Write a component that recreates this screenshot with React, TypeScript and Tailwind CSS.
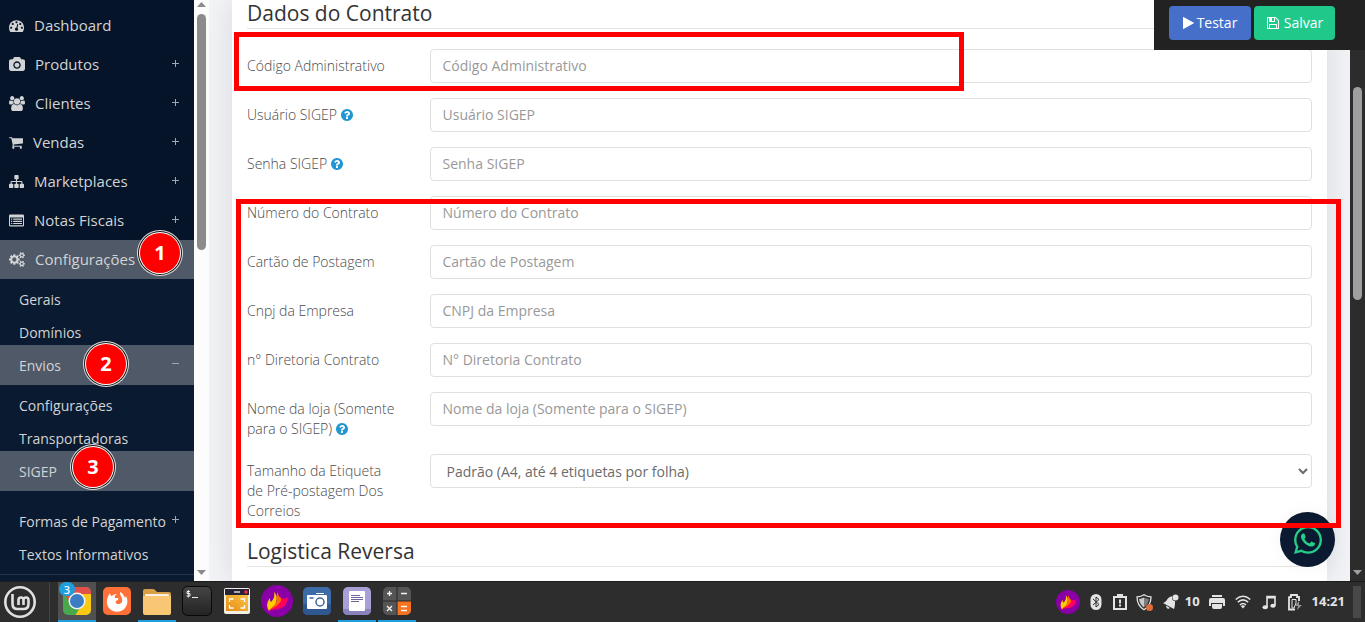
import React from "react";
import { FaWhatsapp } from "react-icons/fa";

function Glyph({ box, d, className }: { box: string; d: string; className: string }) {
  return (
    <svg viewBox={box} className={`shrink-0 fill-current ${className}`} aria-hidden="true">
      <path d={d} />
    </svg>
  );
}

const DASHBOARD =
  "M384 1152q0-53-37.5-90.5t-90.5-37.5-90.5 37.5-37.5 90.5 37.5 90.5 90.5 37.5 90.5-37.5 37.5-90.5zm192-448q0-53-37.5-90.5t-90.5-37.5-90.5 37.5-37.5 90.5 37.5 90.5 90.5 37.5 90.5-37.5 37.5-90.5zm428 481l101-382q6-26-7.5-48.5t-38.5-29.5-48 6.5-30 39.5l-101 382q-60 5-107 43.5t-63 98.5q-20 77 20 146t117 89 146-20 89-117q16-60-6-117t-72-91zm660-33q0-53-37.5-90.5t-90.5-37.5-90.5 37.5-37.5 90.5 37.5 90.5 90.5 37.5 90.5-37.5 37.5-90.5zm-640-640q0-53-37.5-90.5t-90.5-37.5-90.5 37.5-37.5 90.5 37.5 90.5 90.5 37.5 90.5-37.5 37.5-90.5zm448 192q0-53-37.5-90.5t-90.5-37.5-90.5 37.5-37.5 90.5 37.5 90.5 90.5 37.5 90.5-37.5 37.5-90.5zm320 448q0 261-141 483-19 29-54 29h-1402q-35 0-54-29-141-221-141-483 0-182 71-348t191-286 286-191 348-71 348 71 286 191 191 286 71 348z";
const CAMERA =
  "M896 672q119 0 203.5 84.5t84.5 203.5-84.5 203.5-203.5 84.5-203.5-84.5-84.5-203.5 84.5-203.5 203.5-84.5zm704-416q106 0 181 75t75 181v896q0 106-75 181t-181 75h-1408q-106 0-181-75t-75-181v-896q0-106 75-181t181-75h224l51-136q19-49 69.5-84.5t103.5-35.5h512q53 0 103.5 35.5t69.5 84.5l51 136h224zm-704 1152q185 0 316.5-131.5t131.5-316.5-131.5-316.5-316.5-131.5-316.5 131.5-131.5 316.5 131.5 316.5 316.5 131.5z";
const USERS =
  "M593 896q-162 5-265 128h-134q-82 0-138-40.5t-56-118.5q0-353 124-353 6 0 43.5 21t97.5 42.5 119 21.5q67 0 133-23-5 37-5 66 0 139 81 256zm1071 637q0 120-73 189.5t-194 69.5h-874q-121 0-194-69.5t-73-189.5q0-53 3.5-103.5t14-109 26.5-108.5 43-97.5 62-81 85.5-53.5 111.5-20q10 0 43 21.5t73 48 107 48 135 21.5 135-21.5 107-48 73-48 43-21.5q61 0 111.5 20t85.5 53.5 62 81 43 97.5 26.5 108.5 14 109 3.5 103.5zm-1024-1277q0 106-75 181t-181 75-181-75-75-181 75-181 181-75 181 75 75 181zm704 384q0 159-112.5 271.5t-271.5 112.5-271.5-112.5-112.5-271.5 112.5-271.5 271.5-112.5 271.5 112.5 112.5 271.5zm576 225q0 78-56 118.5t-138 40.5h-134q-103-123-265-128 81-117 81-256 0-29-5-66 66 23 133 23 59 0 119-21.5t97.5-42.5 43.5-21q124 0 124 353zm-128-609q0 106-75 181t-181 75-181-75-75-181 75-181 181-75 181 75 75 181z";
const CART =
  "M704 1536q0 52-38 90t-90 38-90-38-38-90 38-90 90-38 90 38 38 90zm896 0q0 52-38 90t-90 38-90-38-38-90 38-90 90-38 90 38 38 90zm128-1088v512q0 24-16.5 42.5t-40.5 21.5l-1044 122q13 60 13 70 0 16-24 64h920q26 0 45 19t19 45-19 45-45 19h-1024q-26 0-45-19t-19-45q0-11 8-31.5t16-36 21.5-40 15.5-29.5l-177-823h-204q-26 0-45-19t-19-45 19-45 45-19h256q16 0 28.5 6.5t19.5 15.5 13 24.5 8 26 5.5 29.5 4.5 26h1201q26 0 45 19t19 45z";
const SITEMAP =
  "M1792 1248v320q0 40-28 68t-68 28h-320q-40 0-68-28t-28-68v-320q0-40 28-68t68-28h96v-192h-512v192h96q40 0 68 28t28 68v320q0 40-28 68t-68 28h-320q-40 0-68-28t-28-68v-320q0-40 28-68t68-28h96v-192h-512v192h96q40 0 68 28t28 68v320q0 40-28 68t-68 28h-320q-40 0-68-28t-28-68v-320q0-40 28-68t68-28h96v-192q0-52 38-90t90-38h512v-192h-96q-40 0-68-28t-28-68v-320q0-40 28-68t68-28h320q40 0 68 28t28 68v320q0 40-28 68t-68 28h-96v192h512q52 0 90 38t38 90v192h96q40 0 68 28t28 68z";
const COGS =
  "M896 896q0-106-75-181t-181-75-181 75-75 181 75 181 181 75 181-75 75-181zm768 512q0-52-38-90t-90-38-90 38-38 90q0 53 37.5 90.5t90.5 37.5 90.5-37.5 37.5-90.5zm0-1024q0-52-38-90t-90-38-90 38-38 90q0 53 37.5 90.5t90.5 37.5 90.5-37.5 37.5-90.5zm-384 421v185q0 10-7 19.5t-16 10.5l-155 24q-11 35-32 76 34 48 90 115 7 11 7 20 0 12-7 19-23 30-82.5 89.5t-78.5 59.5q-11 0-21-7l-115-90q-37 19-77 31-11 108-23 155-7 24-30 24h-186q-11 0-20-7.5t-10-17.5l-23-153q-34-10-75-31l-118 89q-7 7-20 7-11 0-21-8-144-133-144-160 0-9 7-19 10-14 41-53t47-61q-23-44-35-82l-152-24q-10-1-17-9.5t-7-19.5v-185q0-10 7-19.5t16-10.5l155-24q11-35 32-76-34-48-90-115-7-11-7-20 0-12 7-20 22-30 82-89t79-59q11 0 21 7l115 90q34-18 77-32 11-108 23-154 7-24 30-24h186q11 0 20 7.5t10 17.5l23 153q34 10 75 31l118-89q8-7 20-7 11 0 21 8 144 133 144 160 0 8-7 19-12 16-42 54t-45 60q23 48 34 82l152 23q10 2 17 10.5t7 19.5zm640 533v140q0 16-149 31-12 27-30 52 51 113 51 138 0 4-4 7-122 71-124 71-8 0-46-47t-52-68q-20 2-30 2t-30-2q-14 21-52 68t-46 47q-2 0-124-71-4-3-4-7 0-25 51-138-18-25-30-52-149-15-149-31v-140q0-16 149-31 13-29 30-52-51-113-51-138 0-4 4-7 4-2 35-20t59-34 30-16q8 0 46 46.5t52 67.5q20-2 30-2t30 2q51-71 92-112l6-2q4 0 124 70 4 3 4 7 0 25-51 138 17 23 30 52 149 15 149 31zm0-1024v140q0 16-149 31-12 27-30 52 51 113 51 138 0 4-4 7-122 71-124 71-8 0-46-47t-52-68q-20 2-30 2t-30-2q-14 21-52 68t-46 47q-2 0-124-71-4-3-4-7 0-25 51-138-18-25-30-52-149-15-149-31v-140q0-16 149-31 13-29 30-52-51-113-51-138 0-4 4-7 4-2 35-20t59-34 30-16q8 0 46 46.5t52 67.5q20-2 30-2t30 2q51-71 92-112l6-2q4 0 124 70 4 3 4 7 0 25-51 138 17 23 30 52 149 15 149 31z";
const QUESTION =
  "M1024 1376v-192q0-14-9-23t-23-9h-192q-14 0-23 9t-9 23v192q0 14 9 23t23 9h192q14 0 23-9t9-23zm256-672q0-88-55.5-163t-138.5-116-170-41q-243 0-371 213-15 24 8 42l132 100q7 6 19 6 16 0 25-12 53-68 86-92 34-24 86-24 48 0 85.5 26t37.5 59q0 38-20 61t-68 45q-63 28-115.5 86.5t-52.5 125.5v36q0 14 9 23t23 9h192q14 0 23-9t9-23q0-19 21.5-49.5t54.5-49.5q32-18 49-28.5t46-35 44.5-48 28-60.5 12.5-81zm384 192q0 209-103 385.5t-279.5 279.5-385.5 103-385.5-103-279.5-279.5-103-385.5 103-385.5 279.5-279.5 385.5-103 385.5 103 279.5 279.5 103 385.5z";
const PLAY = "M1384 927l-1328 738q-23 13-39.5 3t-16.5-36v-1472q0-26 16.5-36t39.5 3l1328 738q23 13 23 31t-23 31z";
const FLOPPY =
  "M512 1536h768v-384h-768v384zm896 0h128v-896q0-14-10-38.5t-20-34.5l-281-281q-10-10-34-20t-39-10v416q0 40-28 68t-68 28h-576q-40 0-68-28t-28-68v-416h-128v1280h128v-416q0-40 28-68t68-28h832q40 0 68 28t28 68v416zm-384-928v-320q0-13-9.5-22.5t-22.5-9.5h-192q-13 0-22.5 9.5t-9.5 22.5v320q0 13 9.5 22.5t22.5 9.5h192q13 0 22.5-9.5t9.5-22.5zm640 32v928q0 40-28 68t-68 28h-1344q-40 0-68-28t-28-68v-1344q0-40 28-68t68-28h928q40 0 88 20t76 48l280 280q28 28 48 76t20 88z";

function ListIcon() {
  return (
    <svg viewBox="0 0 15 13" className="w-[15px] h-[13px] shrink-0" fill="currentColor" aria-hidden="true">
      <path
        fillRule="evenodd"
        d="M1.3 0.5h12.4a1.3 1.3 0 0 1 1.3 1.3v9.4a1.3 1.3 0 0 1-1.3 1.3H1.3A1.3 1.3 0 0 1 0 11.2V1.8A1.3 1.3 0 0 1 1.3 0.5zM1 3.5v7.7h13V3.5z"
      />
      <path d="M2 4.5h1.2v1.2H2zM4.2 4.5H13v1.2H4.2zM2 6.7h1.2v1.2H2zM4.2 6.7H13v1.2H4.2zM2 8.9h1.2v1.2H2zM4.2 8.9H13v1.2H4.2z" />
    </svg>
  );
}

const menu = [
  { label: "Dashboard", icon: <Glyph box="0 0 1792 1792" d={DASHBOARD} className="size-[15px]" />, more: false },
  { label: "Produtos", icon: <Glyph box="-64 0 1920 1792" d={CAMERA} className="w-4 h-[15px]" />, more: true },
  { label: "Clientes", icon: <Glyph box="0 0 1920 1792" d={USERS} className="w-4 h-[15px]" />, more: true },
  { label: "Vendas", icon: <Glyph box="64 0 1664 1792" d={CART} className="w-[14px] h-[15px]" />, more: true },
  { label: "Marketplaces", icon: <Glyph box="0 0 1792 1792" d={SITEMAP} className="size-[15px]" />, more: true },
  { label: "Notas Fiscais", icon: <ListIcon />, more: true },
];

function Toggle({ open = false, className }: { open?: boolean; className: string }) {
  return (
    <svg viewBox="0 0 8 8" className={`absolute right-[14px] size-2 ${className}`} stroke="#a2a7ae" strokeWidth="1" aria-hidden="true">
      <path d={open ? "M0 3.5h7" : "M0 3.5h7M3.5 0v7"} />
    </svg>
  );
}

function Step({ n, className }: { n: number; className: string }) {
  return (
    <span
      className={`absolute z-20 flex size-10 items-center justify-center rounded-full bg-[#ff0000] font-['Noto_Sans',sans-serif] text-xl font-bold text-white shadow-[0_0_0_1px_#ffffff,0_0_0_2px_#161616,0_0_0_3px_#dddddd] ${className}`}
    >
      {n}
    </span>
  );
}

function SubItem({ label, more = false }: { label: string; more?: boolean }) {
  return (
    <li className="relative">
      <a href="#" className="flex h-[33px] items-center pl-[19px]">
        {label}
      </a>
      {more && <Toggle className="top-[11px]" />}
    </li>
  );
}

function Sidebar() {
  return (
    <nav className="w-[194px] shrink-0 overflow-hidden bg-[#051429] pt-[6px] text-[#d2d3d4]">
      <ul className="text-[15px]">
        {menu.map((m) => (
          <li key={m.label} className="relative">
            <a href="#" className="flex h-[39px] items-center gap-[10px] pl-[9px]">
              {m.icon}
              {m.label}
            </a>
            {m.more && <Toggle className="top-[15px]" />}
          </li>
        ))}
        <li className="relative bg-[#4f5968]">
          <a href="#" className="flex h-[39px] items-center gap-[10px] pl-[9px]">
            <Glyph box="0 0 1920 1792" d={COGS} className="h-[15px] w-4" />
            Configurações
          </a>
          <Step n={1} className="left-[140px] -top-[7px]" />
        </li>
      </ul>
      <ul className="bg-[#0a1a30] pt-1 pb-1 text-sm">
        <SubItem label="Gerais" />
        <SubItem label="Domínios" />
        <li className="relative -mt-1 bg-[#4f5968]">
          <a href="#" className="flex h-10 items-center pt-[2px] pl-[19px]">
            Envios
          </a>
          <Toggle open className="top-[15px]" />
          <Step n={2} className="left-[86px] -top-[1px]" />
        </li>
        <li className="pt-1">
          <ul>
            <SubItem label="Configurações" />
            <SubItem label="Transportadoras" />
            <li className="relative -mt-1 bg-[#4f5968]">
              <a href="#" className="flex h-10 items-center pt-[2px] pl-[19px]">
                SIGEP
              </a>
              <Step n={3} className="left-[73px] -top-1" />
            </li>
          </ul>
        </li>
        <li className="pt-[14px]">
          <ul>
            <SubItem label="Formas de Pagamento" more />
            <SubItem label="Textos Informativos" />
          </ul>
        </li>
      </ul>
      <div className="-mt-px h-10 border-t border-[#283649] bg-[#0a1a30]" />
    </nav>
  );
}

function SideScroll() {
  return (
    <div className="flex w-[15px] shrink-0 flex-col items-center justify-between bg-[#fcfcfc]" aria-hidden="true">
      <div className="flex flex-col items-center gap-[7px] pt-[2px]">
        <svg viewBox="0 0 9 5" className="h-[5px] w-[9px]" fill="#8b8b8b">
          <path d="M4.500 0L9 5H0z" />
        </svg>
        <div className="h-[236px] w-[9px] rounded-full bg-[#8b8b8b]" />
      </div>
      <svg viewBox="0 0 9 5" className="mb-[6px] h-[5px] w-[9px]" fill="#8b8b8b">
        <path d="M0 0h9L4.500 5z" />
      </svg>
    </div>
  );
}

const fields = [
  { id: "codigo", label: "Código Administrativo", hint: "Código Administrativo", help: false },
  { id: "usuario", label: "Usuário SIGEP", hint: "Usuário SIGEP", help: true },
  { id: "senha", label: "Senha SIGEP", hint: "Senha SIGEP", help: true },
  { id: "numero", label: "Número do Contrato", hint: "Número do Contrato", help: false },
  { id: "cartao", label: "Cartão de Postagem", hint: "Cartão de Postagem", help: false },
  { id: "cnpj", label: "Cnpj da Empresa", hint: "CNPJ da Empresa", help: false },
  { id: "diretoria", label: "n° Diretoria Contrato", hint: "N° Diretoria Contrato", help: false },
  { id: "loja", label: "Nome da loja (Somente para o SIGEP)", hint: "Nome da loja (Somente para o SIGEP)", help: true },
];

function Heading({ children }: { children: React.ReactNode }) {
  return (
    <h2 className="mx-[15px] mb-5 border-b border-[#e3e3e3] pb-1 text-[21px] leading-[22px] text-[#333333]">{children}</h2>
  );
}

function Field({ id, label, help = false, children }: { id: string; label: string; help?: boolean; children: React.ReactNode }) {
  return (
    <div className="mb-[15px] flex items-start">
      <label htmlFor={id} className="w-1/6 shrink-0 px-[15px] pt-[7px] text-sm leading-5 font-light text-[#4a4a4a]">
        {label}
        {help && (
          <>
            {" "}
            <Glyph box="128 128 1536 1536" d={QUESTION} className="inline size-3 align-[-1px] text-[#2196d3]" />
          </>
        )}
      </label>
      <div className="flex-1 px-[15px]">{children}</div>
    </div>
  );
}

const control = "block h-[34px] w-full rounded border border-[#e0e0e0] bg-white text-sm";

function Form() {
  return (
    <form className="min-h-full bg-white pt-[2px] shadow-[0_0_32px_rgba(110,112,140,0.22)]">
      <Heading>Dados do Contrato</Heading>
      {fields.map((f) => (
        <Field key={f.id} id={f.id} label={f.label} help={f.help}>
          <input id={f.id} placeholder={f.hint} className={`${control} px-3 pb-[2px] placeholder:text-[#999999]`} />
        </Field>
      ))}
      <Field id="etiqueta" label="Tamanho da Etiqueta de Pré-postagem Dos Correios">
        <select id="etiqueta" className={`${control} pl-3 text-[#6b6b6b]`}>
          <option>Padrão (A4, até 4 etiquetas por folha)</option>
        </select>
      </Field>
      <div className="pt-1">
        <Heading>Logistica Reversa</Heading>
      </div>
    </form>
  );
}

function PageScroll() {
  return (
    <div className="flex w-[15px] shrink-0 flex-col items-center justify-between bg-[#2c2c2c] pt-[87px]" aria-hidden="true">
      <div className="h-[213px] w-[9px] rounded-full bg-[#9f9f9f]" />
      <svg viewBox="0 0 9 5" className="mb-[6px] h-[5px] w-[9px]" fill="#9f9f9f">
        <path d="M0 0h9L4.500 5z" />
      </svg>
    </div>
  );
}

function Flame({ className }: { className: string }) {
  return (
    <svg viewBox="0 0 32 32" className={className} aria-hidden="true">
      <circle cx="16" cy="16" r="16" fill="#8a00a6" />
      <path d="M8 26C5 21 6 17 9 13c0 2 0 3 1 4 3-3 4-6 3-10 4 4 3 9 1 13-2 2-4 3-6 6z" fill="#ffcc00" />
      <path d="M8 26c3-4 7-6 8-11 0-3-1-5 1-8 0 4 2 5 3 6 2 5-1 8-6 10-3 1-4 1-6 3z" fill="#ff6b00" />
      <path d="M8 26c4-4 11-5 13-13 2 1 4 1 6-1-1 8-4 11-10 12-4 0-6 1-9 2z" fill="#ff005c" />
    </svg>
  );
}

const apps: { name: string; running?: boolean; active?: boolean; icon: React.ReactNode }[] = [
  {
    name: "Chrome",
    running: true,
    active: true,
    icon: (
      <svg viewBox="0 0 30 30" className="size-[30px]">
        <defs>
          <clipPath id="chromeClip">
            <rect x="1" y="1" width="28" height="28" rx="5" />
          </clipPath>
        </defs>
        <g clipPath="url(#chromeClip)">
          <path d="M0 0h30v30H0z" fill="#49a84c" />
          <path d="M15 7h15v23H13l7-12z" fill="#fbc914" />
          <path d="M0 0h30v8H15l-7 9L1 5z" fill="#e2504a" />
        </g>
        <circle cx="15" cy="15" r="8.500" fill="#f4f4f4" />
        <circle cx="15" cy="15" r="7" fill="#3b7cc2" />
      </svg>
    ),
  },
  {
    name: "Firefox",
    icon: (
      <svg viewBox="0 0 30 30" className="size-[30px]">
        <rect x="1" y="1" width="28" height="28" rx="5" fill="#ff7139" />
        <path
          d="M8 7c0 2 1 3 2 3 1-1 2-2 5-2-2 1-3 3-2 4l3 0c1 1 0 2-2 3-1 1 0 3 2 3 3 0 5-2 4-5 0-2-2-3-2-7 3 1 4 4 5 6l1-2c2 4 2 8-1 12-4 5-12 5-16 0-3-4-3-9 1-15z"
          fill="#ffffff"
        />
      </svg>
    ),
  },
  {
    name: "Arquivos",
    running: true,
    icon: (
      <svg viewBox="0 0 30 30" className="size-[30px]">
        <path d="M1 5q0-2 2-2h8q1 0 2 1l2 2h12q2 0 2 2v6H1z" fill="#d8a046" />
        <rect x="3" y="8" width="24" height="5" rx="1" fill="#f4f0e6" />
        <path d="M1 10h28v17q0 2-2 2H3q-2 0-2-2z" fill="#f9c673" />
      </svg>
    ),
  },
  {
    name: "Terminal",
    icon: (
      <svg viewBox="0 0 30 30" className="size-[30px]">
        <defs>
          <linearGradient id="termFill" x1="0" y1="0" x2="0" y2="1">
            <stop offset="0" stopColor="#454545" />
            <stop offset="1" stopColor="#232323" />
          </linearGradient>
        </defs>
        <rect x="0.500" y="0.500" width="29" height="29" rx="5" fill="url(#termFill)" stroke="#090909" />
        <path d="M8 5.500H5v2h3v2.500H4.500M6.300 4v7.500M10 11.500h6" fill="none" stroke="#eeeeee" />
      </svg>
    ),
  },
  {
    name: "Gravador",
    icon: (
      <svg viewBox="0 0 30 30" className="size-[30px]">
        <defs>
          <linearGradient id="recFill" x1="0" y1="1" x2="1" y2="0">
            <stop offset="0" stopColor="#e68a17" />
            <stop offset="1" stopColor="#fbc541" />
          </linearGradient>
        </defs>
        <rect x="2" y="2" width="26" height="26" rx="2" fill="#f1efe4" />
        <path d="M3 3h24v6H3z" fill="#272238" />
        <path d="M4 9h22v16H4z" fill="url(#recFill)" />
        <path d="M12 6h6" stroke="#aaaaaa" strokeWidth="2" />
        <circle cx="24" cy="6" r="1.800" fill="#f12a3d" />
        <path d="M7.500 16v-3h4M18.500 13h4v3M22.500 19v3h-4M11.500 22h-4v-3" fill="none" stroke="#ffffff" strokeWidth="1.300" />
      </svg>
    ),
  },
  { name: "Flameshot", icon: <Flame className="size-8" /> },
  {
    name: "Captura de tela",
    icon: (
      <svg viewBox="0 0 30 30" className="size-[30px]">
        <rect x="1" y="1" width="28" height="28" rx="5" fill="#3d6ba8" />
        <path d="M1 18h28v6q0 5-5 5H6q-5 0-5-5z" fill="#2f5891" />
        <rect x="5" y="9" width="20" height="14" rx="1" fill="#ffffff" />
        <path d="M14 7.500h8" stroke="#ffffff" strokeWidth="1" />
        <circle cx="18" cy="16" r="4" fill="none" stroke="#3a659f" strokeWidth="1.500" />
        <path d="M7.500 12h4" stroke="#3a659f" strokeWidth="1.500" />
      </svg>
    ),
  },
  {
    name: "Editor de texto",
    running: true,
    icon: (
      <svg viewBox="0 0 30 30" className="size-[30px]">
        <rect x="1" y="1" width="28" height="28" rx="5" fill="#a8a0d6" />
        <path d="M1 23h28q0 6-5 6H6q-5 0-5-6z" fill="#8983bc" />
        <rect x="7" y="5" width="16" height="20" rx="1" fill="#ffffff" />
        <path d="M9 9.500h9M9 11.500h12M9 13.500h12M9 15.500h8" stroke="#6f669e" />
      </svg>
    ),
  },
  {
    name: "Calculadora",
    running: true,
    icon: (
      <svg viewBox="0 0 30 30" className="size-[30px]">
        <defs>
          <clipPath id="calcClip">
            <rect x="1" y="1" width="28" height="28" rx="5" />
          </clipPath>
        </defs>
        <g clipPath="url(#calcClip)">
          <path d="M0 0h30v30H0z" fill="#555555" />
          <path d="M15 15h15v15H15z" fill="#f8731f" />
          <path d="M15 0v30M0 15h30" stroke="#292929" />
        </g>
        <path d="M5 7.500h5M7.500 5v5M19 7.500h6M5 20l5 5M10 20l-5 5M19 20.500h6M19 24.500h6" stroke="#f5f5f5" strokeWidth="1.300" />
      </svg>
    ),
  },
];

function Tray() {
  return (
    <div className="flex items-center text-[13px] font-bold text-[#e4e4e4]">
      <Flame className="size-6" />
      <svg viewBox="0 0 12 16" className="ml-[10px] h-4 w-3">
        <rect x="0.500" width="11" height="16" rx="5.500" fill="#e4e4e4" />
        <path d="M3 5l6 5.500L6 13V3l3 2.500L3 11" fill="none" stroke="#2d2d2d" />
      </svg>
      <svg viewBox="0 0 14 16" className="ml-[11px] h-4 w-[14px]">
        <path d="M1 3h12v12H1z" fill="none" stroke="#e4e4e4" strokeWidth="2" />
        <path d="M4 0h6v4H4z" fill="#e4e4e4" />
        <path d="M7 5.500v4M7 10.500v2" stroke="#e4e4e4" strokeWidth="2" />
      </svg>
      <svg viewBox="0 0 17 17" className="ml-[9px] size-[17px]">
        <path d="M8 0.800c2 1.500 4 2 7 2 0 6-2 10-7 13-5-3-7-7-7-13 3 0 5-0.500 7-2z" fill="none" stroke="#e4e4e4" strokeWidth="1.300" />
        <path d="M8 3.500c2 1 3 1.300 5 1.300-0.500 4-2 6.500-5 8.700z" fill="#7b7b7b" />
        <path d="M8 3.500c-2 1-3 1.300-5 1.300 0.500 4 2 6.500 5 8.700z" fill="#c9c9c9" />
        <circle cx="13.500" cy="13.500" r="3.500" fill="#de6f38" />
      </svg>
      <svg viewBox="0 0 16 16" className="ml-[10px] size-4">
        <path d="M0 9c4-1 4-5 7-6 1-1 2-1 2 0 0 3 1 4 3 4 0 3 0 5-1 8z" fill="#e4e4e4" />
        <circle cx="12.500" cy="3.500" r="3" fill="#e4e4e4" />
        <path d="M3 11.500c0 3 2 4 4 2.500z" fill="#e4e4e4" />
      </svg>
      <span className="ml-[6px]">10</span>
      <svg viewBox="0 0 16 16" className="ml-[9px] size-4" fill="#e4e4e4">
        <path d="M3 1h10v2H3zM2 4h12q2 0 2 2v6h-2V9H2v3H0V6q0-2 2-2zM3 10h10v3q0 2-2 2H5q-2 0-2-2z" />
      </svg>
      <svg viewBox="0 0 16 14" className="ml-[10px] h-[14px] w-4" fill="none" stroke="#e4e4e4" strokeWidth="1.600">
        <path d="M0.700 4.500q7.300-6.500 14.600 0M2.800 7.200q5.200-4.600 10.400 0M5 9.800q3-2.600 6 0" />
        <path d="M5.800 11q2.200-1.500 4.400 0L8 13.500z" fill="#e4e4e4" stroke="none" />
      </svg>
      <svg viewBox="0 0 14 15" className="ml-[11px] h-[15px] w-[14px]">
        <path d="M5 12V1.500h8v9" fill="none" stroke="#e4e4e4" strokeWidth="1.600" />
        <path d="M5 1h8v2.500H5z" fill="#e4e4e4" />
        <ellipse cx="3.200" cy="12.300" rx="2.700" ry="2" fill="#e4e4e4" />
        <ellipse cx="11" cy="10.800" rx="2.700" ry="2" fill="#e4e4e4" />
      </svg>
      <svg viewBox="0 0 14 17" className="ml-[12px] h-[17px] w-[14px]">
        <path d="M1 3h2V1h6v2h2v4M1 2.500v13h6" fill="none" stroke="#e4e4e4" strokeWidth="1.800" />
        <path d="M4 5.500h4V9l-2 5H4z" fill="none" stroke="#e4e4e4" />
        <path d="M11 7l-4 5h3l-1 4 5-5h-3z" fill="#929292" />
      </svg>
      <time className="ml-[10px]">14:21</time>
      <div className="ml-2 h-8 w-2 bg-[#484848]" />
    </div>
  );
}

function Taskbar() {
  return (
    <footer className="flex h-[41px] shrink-0 items-stretch justify-between border-t border-[#1c1c1c] bg-[#2d2d2d] pr-1 pl-1 font-['Noto_Sans',sans-serif]">
      <div className="flex items-stretch">
        <button aria-label="Menu" className="flex items-center">
          <svg viewBox="0 0 32 32" className="size-8" fill="none" stroke="#e0e0e0">
            <circle cx="16" cy="16" r="14.700" strokeWidth="2.600" />
            <path d="M8.500 8v10q0 5 5 5h6q5 0 5-5v-4q0-2.500-2.500-2.500T19.500 14v5M19.500 14q0-2.500-2.500-2.500T14.500 14v5" strokeWidth="2.600" />
          </svg>
        </button>
        <div className="ml-[13px] w-px bg-[#434343]" />
        <div className="ml-2 flex gap-[2px]">
          {apps.map((a) => (
            <button
              key={a.name}
              aria-label={a.name}
              className={`relative flex w-[38px] items-center justify-center border-b-2 ${a.active ? "bg-[#505050]" : ""} ${a.running ? "border-[#1f9ede]" : "border-transparent"}`}
            >
              {a.icon}
              {a.active && (
                <span className="absolute top-0 left-px flex h-[14px] w-4 items-center justify-center rounded-full bg-[#1f9ede] text-[11px] leading-none font-medium text-white">
                  3
                </span>
              )}
            </button>
          ))}
        </div>
      </div>
      <Tray />
    </footer>
  );
}

export default function App() {
  return (
    <div className="flex h-screen flex-col overflow-hidden font-['Open_Sans',sans-serif]">
      <div className="relative flex min-h-0 flex-1 overflow-hidden">
        <Sidebar />
        <SideScroll />
        <main className="min-w-0 flex-1 overflow-hidden bg-[#f4f5f7] pr-[23px] pl-[23px]">
          <Form />
        </main>
        <PageScroll />
        <div className="absolute top-0 right-0 flex h-[50px] w-[211px] gap-[3px] bg-[#222222] pt-[6px] pl-[15px] text-sm text-white">
          <button className="flex h-[34px] w-[82px] items-center justify-center gap-[3px] rounded bg-[#466fca]">
            <Glyph box="0 0 1408 1792" d={PLAY} className="h-[14px] w-[11px]" />
            Testar
          </button>
          <button className="flex h-[34px] w-[81px] items-center justify-center gap-1 rounded bg-[#20c88a]">
            <Glyph box="0 0 1792 1792" d={FLOPPY} className="size-[14px]" />
            Salvar
          </button>
        </div>
        <a
          href="#"
          aria-label="WhatsApp"
          className="absolute right-[30px] bottom-[14px] flex size-[55px] items-center justify-center rounded-full bg-[#0b1a30] text-[#26cc88] shadow-[0_0_20px_rgba(0,0,0,0.04)]"
        >
          <FaWhatsapp className="size-8" />
        </a>
        <div className="pointer-events-none absolute top-8 right-[401px] left-[234px] h-[59px] border-5 border-[#ff0000]" />
        <div className="pointer-events-none absolute top-[199px] right-6 left-[236px] h-[329px] border-5 border-[#ff0000]" />
      </div>
      <Taskbar />
    </div>
  );
}
